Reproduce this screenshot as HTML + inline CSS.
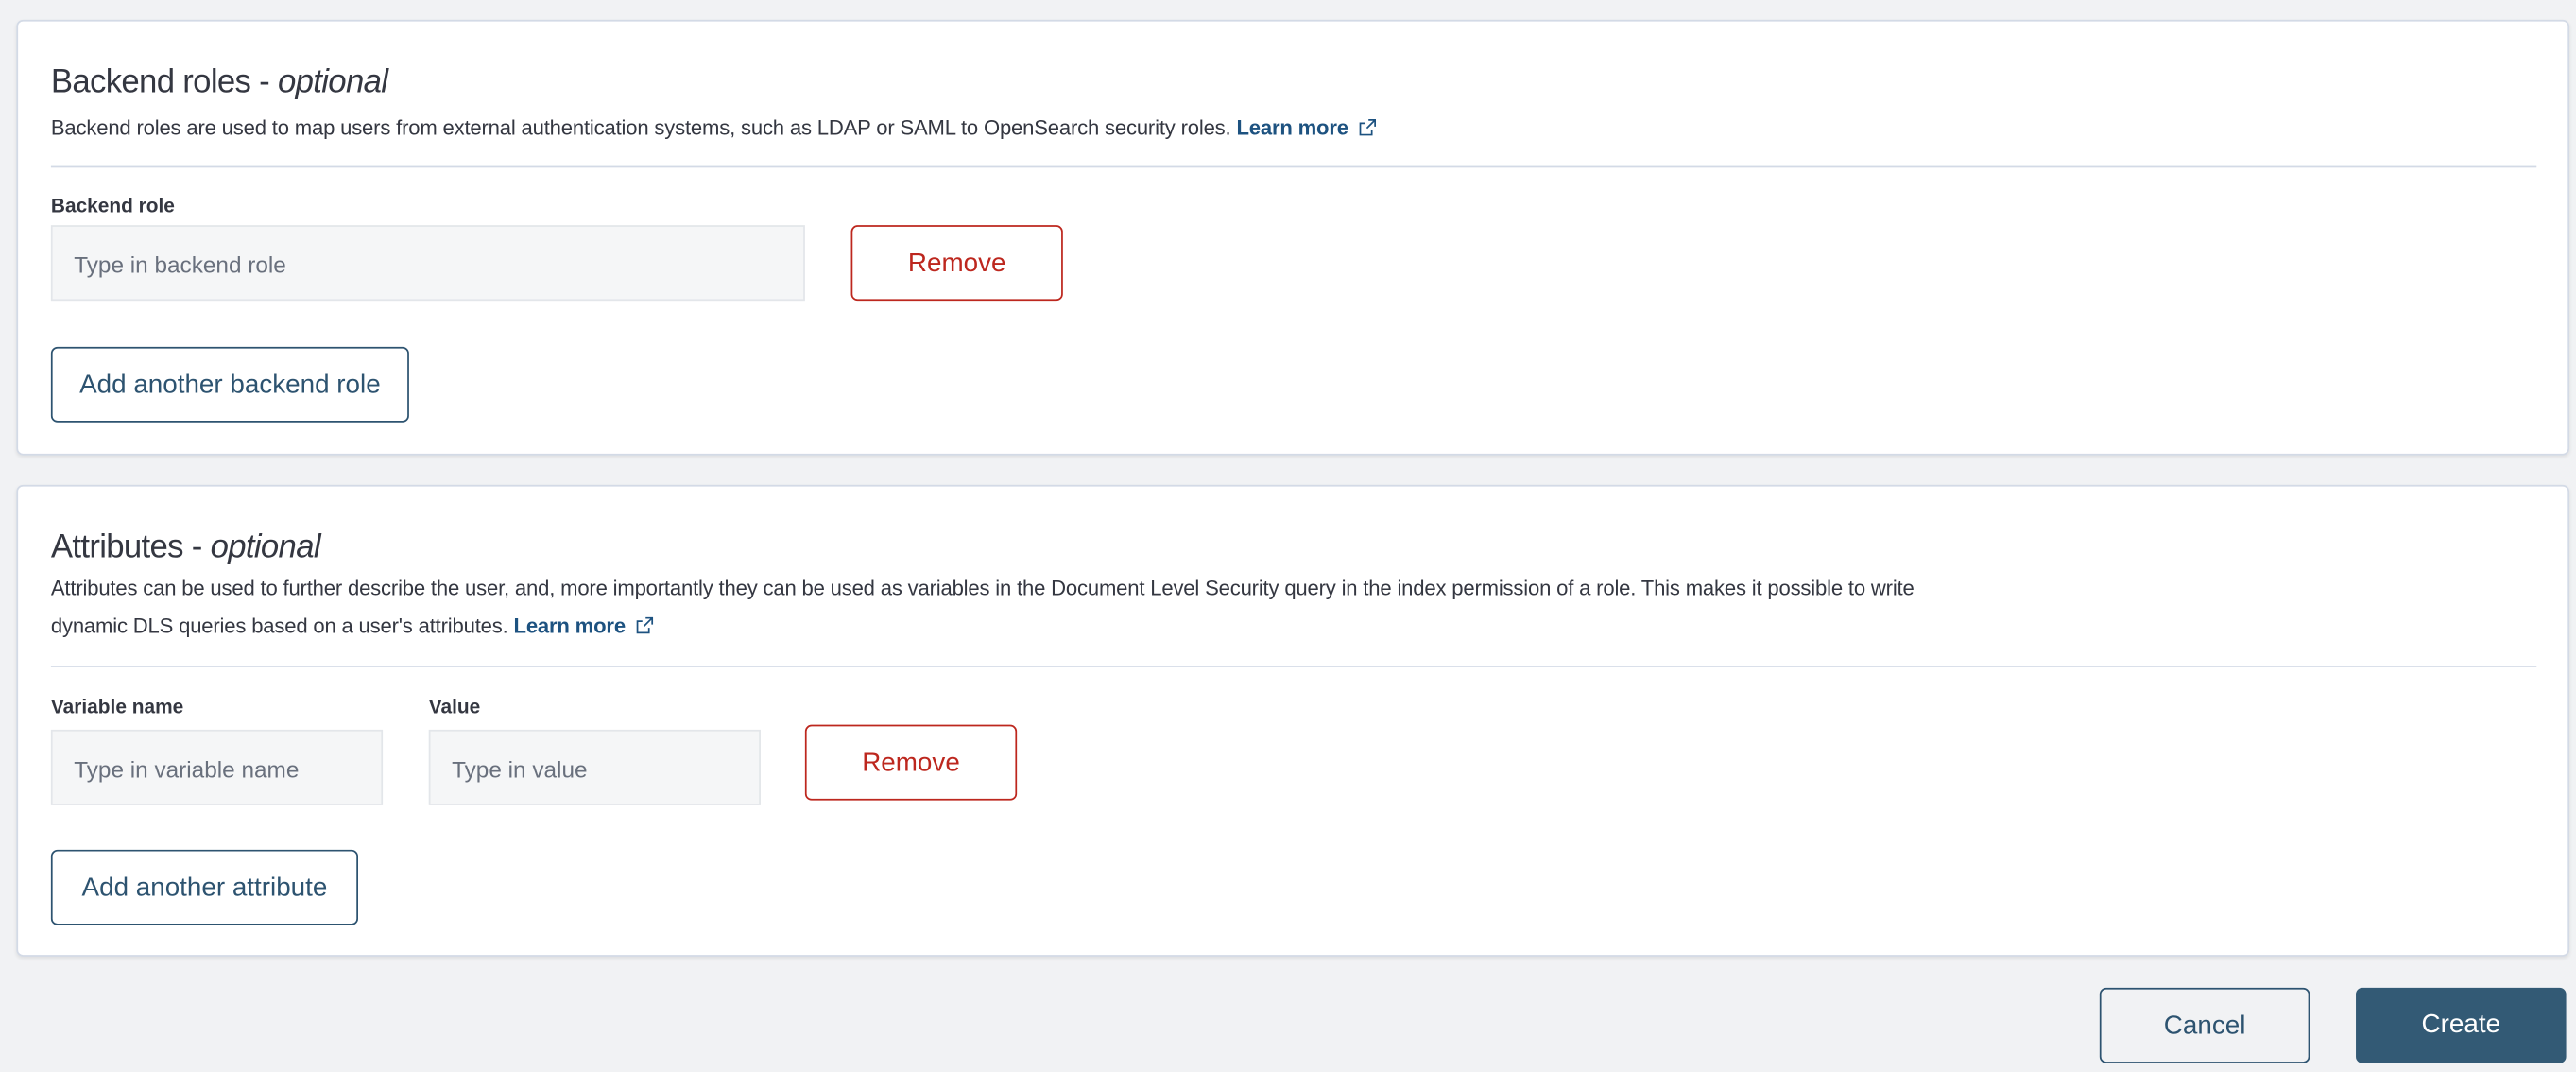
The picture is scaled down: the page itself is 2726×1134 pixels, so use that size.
<!DOCTYPE html>
<html><head><meta charset="utf-8"><style>
html,body{margin:0;padding:0;background:#f1f2f4;width:2726px;height:1134px;overflow:hidden}
#w{position:absolute;left:0;top:0;width:1568px;height:652px;transform:scale(1.73852);transform-origin:0 0;font-family:"Liberation Sans",sans-serif;color:#343741}
.p{position:absolute;left:10px;width:1552px;background:#fff;border:1px solid #d3dae6;border-radius:4px;box-shadow:0 1px 2px rgba(0,0,0,.08)}
.a{position:absolute;white-space:nowrap}
h2{position:absolute;margin:0;font-weight:300;font-size:20px;color:#343741;left:20px;white-space:nowrap;letter-spacing:-0.4px}
h2 i{font-weight:300}
.d{font-size:12.7px;color:#343741;left:20px;line-height:23px;letter-spacing:-0.1px}
.d b{color:#1d5280;font-weight:bold}
.hr{position:absolute;left:20px;right:19px;height:1px;background:#d3dae6}
.l{font-size:12px;font-weight:bold;color:#343741}
.in{position:absolute;background:#f5f6f7;border:1px solid #e3e6ea;box-sizing:border-box;font-size:14px;color:#69707d;padding-left:13px;line-height:46px;white-space:nowrap}
.b{position:absolute;box-sizing:border-box;border-radius:4px;font-size:16px;text-align:center;background:#fff;white-space:nowrap}
.r{border:1px solid #bd271e;color:#bd271e;line-height:46px}
.bl{border:1px solid #2d5370;color:#2d5370;line-height:46px}
.ext{display:inline-block;vertical-align:-1px;margin-left:6px}
</style></head><body><div id="w">
<div class="p" style="top:12px;height:263px">
 <h2 style="top:26px">Backend roles - <i>optional</i></h2>
 <div class="a d" style="top:54px">Backend roles are used to map users from external authentication systems, such as LDAP or SAML to OpenSearch security roles. <b>Learn more</b><svg class="ext" width="11" height="11" viewBox="0 0 11 11"><path d="M6 1h4v4M10 1L5 6M8 7v3H1V3h3" fill="none" stroke="#1d5280" stroke-width="1"/></svg></div>
 <div class="hr" style="top:88px"></div>
 <div class="a l" style="left:20px;top:105px">Backend role</div>
 <div class="in" style="left:20px;top:124px;width:459px;height:46px">Type in backend role</div>
 <div class="b r" style="left:507px;top:124px;width:129px;height:46px">Remove</div>
 <div class="b bl" style="left:20px;top:198px;width:218px;height:46px">Add another backend role</div>
</div>
<div class="p" style="top:295px;height:285px">
 <h2 style="top:26px">Attributes - <i>optional</i></h2>
 <div class="a d" style="top:51px">Attributes can be used to further describe the user, and, more importantly they can be used as variables in the Document Level Security query in the index permission of a role. This makes it possible to write<br>dynamic DLS queries based on a user's attributes. <b>Learn more</b><svg class="ext" width="11" height="11" viewBox="0 0 11 11"><path d="M6 1h4v4M10 1L5 6M8 7v3H1V3h3" fill="none" stroke="#1d5280" stroke-width="1"/></svg></div>
 <div class="hr" style="top:109px"></div>
 <div class="a l" style="left:20px;top:127px">Variable name</div>
 <div class="a l" style="left:250px;top:127px">Value</div>
 <div class="in" style="left:20px;top:148px;width:202px;height:46px">Type in variable name</div>
 <div class="in" style="left:250px;top:148px;width:202px;height:46px">Type in value</div>
 <div class="b r" style="left:479px;top:145px;width:129px;height:46px">Remove</div>
 <div class="b bl" style="left:20px;top:221px;width:187px;height:46px">Add another attribute</div>
</div>
<div class="b bl" style="left:1278px;top:601px;width:128px;height:46px;background:#f1f2f4">Cancel</div>
<div class="b" style="left:1434px;top:601px;width:128px;height:46px;background:#335a75;color:#fff;line-height:46px">Create</div>
</div></body></html>
